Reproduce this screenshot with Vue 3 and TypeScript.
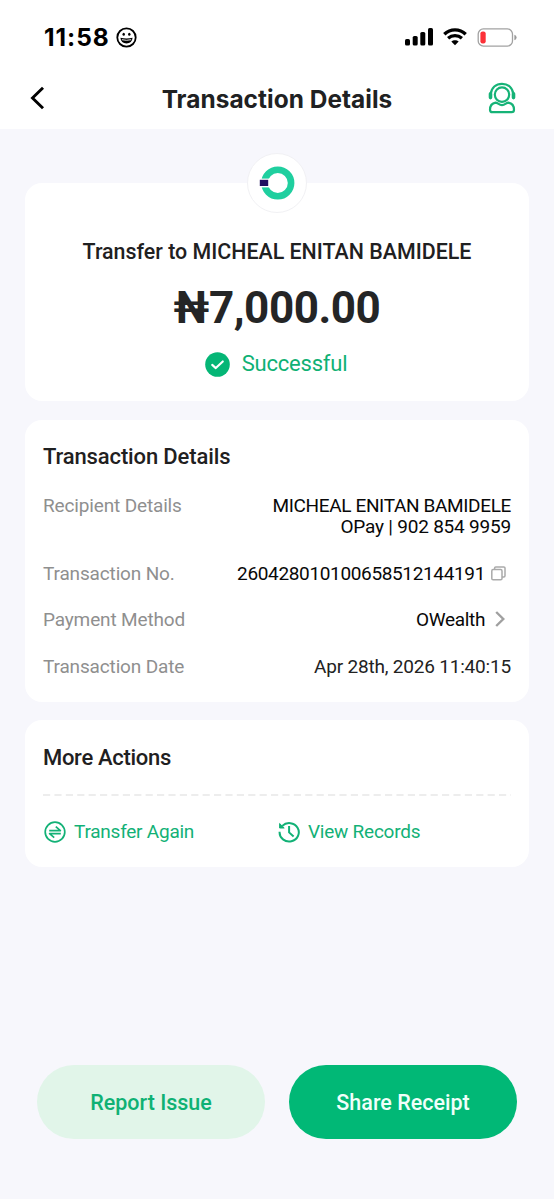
<script setup lang="ts">
interface DetailRow {
  label: string
  lines: string[]
  kind?: 'copy' | 'link' | 'date' | 'recipient'
}

const rows: DetailRow[] = [
  { label: 'Recipient Details', lines: ['MICHEAL ENITAN BAMIDELE', 'OPay | 902 854 9959'], kind: 'recipient' },
  { label: 'Transaction No.', lines: ['260428010100658512144191'], kind: 'copy' },
  { label: 'Payment Method', lines: ['OWealth'], kind: 'link' },
  { label: 'Transaction Date', lines: ['Apr 28th, 2026 11:40:15'], kind: 'date' },
]
</script>

<template>
  <div class="screen">
    <header class="top">
      <div class="status">
        <span class="clock">11:58</span>
        <svg class="smile" width="21" height="21" viewBox="0 0 21 21" fill="none">
          <circle cx="10.5" cy="10.5" r="9.2" stroke="#000" stroke-width="1.8" />
          <ellipse cx="7.7" cy="7.3" rx="1.2" ry="1.5" fill="#000" />
          <ellipse cx="13.3" cy="7.3" rx="1.2" ry="1.5" fill="#000" />
          <path d="M4.4 10.8Q10.5 12.4 16.6 10.8Q16 16.5 10.5 16.5Q5 16.5 4.4 10.8Z" fill="#000" />
          <path d="M5.9 12.7Q10.5 13.9 15.1 12.7" stroke="#fff" stroke-width=".9" />
        </svg>
        <svg class="signal" width="28" height="18" viewBox="0 0 28 18">
          <rect x="0" y="11" width="5" height="6.5" rx="1.6" />
          <rect x="7.7" y="8" width="5" height="9.5" rx="1.6" />
          <rect x="15.3" y="4" width="5" height="13.5" rx="1.6" />
          <rect x="23" y="0" width="5" height="17.5" rx="1.6" />
        </svg>
        <svg class="wifi" width="24" height="18" viewBox="0 0 24 18" fill="none">
          <path d="M1.3 6.2C7.3.3 16.7.3 22.7 6.2" stroke="#000" stroke-width="3.3" />
          <path d="M5.1 10.3C9 6.7 15 6.7 18.9 10.3" stroke="#000" stroke-width="3.2" />
          <path d="M8.3 13.6C10.4 11.8 13.6 11.8 15.7 13.6L12 17.3Z" fill="#000" />
        </svg>
        <svg class="battery" width="40" height="19" viewBox="0 0 40 19">
          <rect x="1.2" y=".9" width="34.3" height="17.2" rx="5.2" fill="none" stroke="#a2a2a2" stroke-width="1.3" />
          <rect x="3.4" y="3.4" width="5.3" height="12" rx="2.2" fill="#fc3138" />
          <path d="M37.4 6.7Q39.6 7.4 39.6 9.5T37.4 12.3Z" fill="#9a9a9a" />
        </svg>
      </div>
      <div class="nav">
        <svg class="back" width="15" height="24" viewBox="0 0 15 24" fill="none">
          <path d="M13 1.8L2.5 12L13 22.2" stroke="#000" stroke-width="2.9" />
        </svg>
        <h1>Transaction Details</h1>
        <svg class="agent" width="28" height="32" viewBox="0 0 28 32" fill="none" stroke="#16b377" stroke-width="2.2">
          <circle cx="14" cy="12.6" r="7.2" />
          <path d="M2.7 12.2C3.3 5.6 8 1.8 14 1.8S24.7 5.6 25.3 12.2" />
          <path d="M2.5 11.8V15.6M25.5 11.8V15.6" stroke-width="3.6" stroke-linecap="round" />
          <path d="M7.6 20.6C9.6 20.6 11 23.1 14 23.1S18.4 20.6 20.4 20.6C24.2 21.2 26 24.5 26 27.8Q26 30.2 23.6 30.2H4.4Q2 30.2 2 27.8C2 24.5 3.8 21.2 7.6 20.6Z" stroke-linejoin="round" />
        </svg>
      </div>
    </header>

    <main>
      <section class="card summary">
        <div class="logo">
          <svg width="36" height="34" viewBox="0 0 36 34">
            <circle cx="18.8" cy="17" r="13.3" fill="none" stroke="#1fcf9f" stroke-width="6.6" />
            <rect x="0" y="12.6" width="10.2" height="8.8" fill="#fff" />
            <rect x=".8" y="13.8" width="8.4" height="6.2" fill="#210f60" />
          </svg>
        </div>
        <p class="payee">Transfer to MICHEAL ENITAN BAMIDELE</p>
        <p class="amount">₦7,000.00</p>
        <p class="state">
          <svg width="25" height="25" viewBox="0 0 25 25" fill="none">
            <circle cx="12.5" cy="12.5" r="12.3" fill="#05b676" />
            <path d="M7.2 12.9L10.8 16.1L17.8 9.4" stroke="#fff" stroke-width="2.1" stroke-linecap="round" stroke-linejoin="round" />
          </svg>
          <span>Successful</span>
        </p>
      </section>

      <section class="card details">
        <h2>Transaction Details</h2>
        <dl>
          <div v-for="row in rows" :key="row.label" class="row" :class="row.kind">
            <dt>{{ row.label }}</dt>
            <dd>
              <div class="value"><span v-for="line in row.lines" :key="line">{{ line }}</span></div>
              <svg v-if="row.kind === 'copy'" class="copy-icon" width="15" height="15" viewBox="0 0 15 15" fill="none" stroke="#aaa" stroke-width="1.5">
                <rect x=".8" y="3.6" width="10.2" height="10.2" rx="1.3" />
                <path d="M3.6 3.4V2.1Q3.6 .9 4.8 .9H12.8Q14 .9 14 2.1V9.8Q14 11 12.8 11H11" />
              </svg>
              <svg v-if="row.kind === 'link'" class="chevron" width="10" height="16" viewBox="0 0 10 16" fill="none">
                <path d="M1.2 1L8.3 8L1.2 15" stroke="#a0a0a0" stroke-width="2.4" />
              </svg>
            </dd>
          </div>
        </dl>
      </section>

      <section class="card actions">
        <h2>More Actions</h2>
        <svg class="divider" width="468" height="2" viewBox="0 0 468 2">
          <path d="M0 1H468" stroke="#e8e8e8" stroke-width="1.6" stroke-dasharray="7.2 4.2" />
        </svg>
        <div class="links">
          <a class="again">
            <svg width="22" height="22" viewBox="0 0 22 22" fill="none" stroke="#12b176" stroke-width="1.7">
              <circle cx="11" cy="11" r="9.8" />
              <path d="M5.2 9.6H16.4L11.8 5.6M16.8 12.7H5.6L10.2 16.7" stroke-linejoin="round" />
            </svg>
            <span>Transfer Again</span>
          </a>
          <a class="records">
            <svg width="22" height="22" viewBox="0 0 22 22" fill="none" stroke="#12b176" stroke-width="2">
              <path d="M1.6 10.8A9.6 9.2 0 1 0 4.3 4.9" />
              <path d="M1.6 2.5V7H6.2Z" fill="#12b176" stroke-width="1" />
              <path d="M11.1 5V11.4L15.6 15.5" />
            </svg>
            <span>View Records</span>
          </a>
        </div>
      </section>
    </main>

    <footer>
      <button class="report">Report Issue</button>
      <button class="share">Share Receipt</button>
    </footer>
  </div>
</template>

<style>
body {
  background: #f7f7fc;
}
</style>

<style scoped>
.screen {
  width: 554px;
  height: 1199px;
  display: flex;
  flex-direction: column;
  background: #f7f7fc;
  font-family: Roboto, "Liberation Sans", sans-serif;
  color: #1f2021;
  overflow: hidden;
}
h1, h2, p, dl, dd { margin: 0; }
svg { display: block; flex: none; }
.top { height: 129px; background: #fff; flex: none; }
.status {
  height: 74px;
  box-sizing: border-box;
  display: flex;
  align-items: center;
  padding: 0 37px 0 44px;
}
.clock {
  width: 65px;
  white-space: nowrap;
  font: 700 24.5px/30px Inter, sans-serif;
  letter-spacing: 0.95px;
  color: #000;
}
.smile { margin-left: 7px; }
.signal { margin-left: auto; }
.wifi { margin-left: 10px; }
.battery { margin-left: 10px; }
.nav {
  height: 48px;
  display: grid;
  grid-template-columns: 32px 1fr 32px;
  align-items: center;
  padding: 0 38px 0 30px;
}
.agent { justify-self: end; }
h1 {
  font: 700 24.4px/30px Inter, sans-serif;
  letter-spacing: 0.05px;
  color: #202122;
  white-space: nowrap;
  text-align: center;
  padding: 2px 0 0 8px;
}
main { padding: 54px 25px 0; flex: 1; }
.card {
  background: #fff;
  border-radius: 17px;
  box-sizing: border-box;
}
.summary {
  height: 218px;
  display: flex;
  flex-direction: column;
  align-items: center;
  white-space: nowrap;
}
.logo {
  width: 60px;
  height: 60px;
  margin-top: -30px;
  box-sizing: border-box;
  border: 1px solid #f1f1f4;
  border-radius: 50%;
  background: #fff;
  display: flex;
  align-items: center;
  justify-content: center;
}
.payee {
  margin-top: 25px;
  font-size: 21.4px;
  line-height: 28px;
  font-weight: 500;
}
.amount {
  margin-top: 14px;
  font-size: 44px;
  line-height: 56px;
  font-weight: 700;
  letter-spacing: -0.45px;
  color: #242526;
}
.state {
  margin-top: 13px;
  padding-right: 2px;
  display: flex;
  align-items: center;
  gap: 12px;
  font-size: 22px;
  line-height: 30px;
  letter-spacing: -0.2px;
  color: #0fb174;
}
.details { height: 282px; margin-top: 19px; padding: 23px 18px 0; }
h2 { font-size: 22px; line-height: 28px; font-weight: 500; letter-spacing: -0.13px; white-space: nowrap; }
.actions h2 { letter-spacing: -0.3px; }
dl { margin-top: 21px; }
.row { display: flex; justify-content: space-between; height: 46.5px; }
.row.recipient { height: 68px; }
.row.copy { height: 46px; }
dt { font-size: 19px; line-height: 27px; letter-spacing: -0.15px; color: #8f8f8f; white-space: nowrap; }
dd { display: flex; font-size: 19px; line-height: 27px; letter-spacing: -0.35px; color: #080808; white-space: nowrap; }
.value { display: flex; flex-direction: column; align-items: flex-end; }
.recipient .value { line-height: 21px; padding-top: 3px; }
.recipient .value span:last-child { letter-spacing: -0.2px; }
.date dd { color: #222; letter-spacing: -0.19px; }
.copy-icon { margin: 6px 5px 0 6px; }
.chevron { margin: 5px 6px 0 10px; }
.actions { height: 147px; margin-top: 18px; padding: 24px 18px 0; }
.divider { margin-top: 22px; }
.links { display: flex; margin-top: 23px; }
.links a {
  width: 234px;
  display: flex;
  align-items: center;
  gap: 8px;
  padding-left: 1px;
  box-sizing: border-box;
  font-size: 19px;
  line-height: 26px;
  letter-spacing: -0.24px;
  color: #12b176;
  white-space: nowrap;
}
footer { display: flex; gap: 24px; padding: 0 37px 60px; flex: none; }
button {
  flex: 1;
  height: 74px;
  border: 0;
  padding: 1px 0 0;
  border-radius: 37px;
  font: 500 21.5px/28px Roboto, sans-serif;
}
.report { background: #e1f5e9; color: #0fb174; }
.share { background: #01b876; color: #f0fffa; }
</style>
